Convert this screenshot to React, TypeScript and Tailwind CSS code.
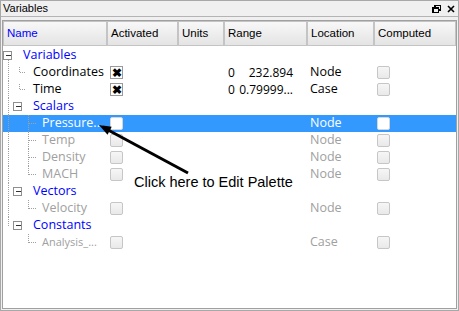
import React from "react";

type Row = {
  name: string;
  level: 0 | 1 | 2;
  tone: "group" | "on" | "off" | "sel";
  checked?: boolean;
  range?: [string, string];
  loc?: string;
  root?: "full" | "fromBox" | "toCenter";
  leaf1?: boolean;
  leaf2?: "full" | "half";
  small?: boolean;
};

const rows: Row[] = [
  { name: "Variables", level: 0, tone: "group", root: "fromBox" },
  { name: "Coordinates", level: 1, tone: "on", checked: true, range: ["0", "232.894"], loc: "Node", root: "full", leaf1: true },
  { name: "Time", level: 1, tone: "on", checked: true, range: ["0", "0.79999..."], loc: "Case", root: "full", leaf1: true },
  { name: "Scalars", level: 1, tone: "group", root: "full" },
  { name: "Pressure...", level: 2, tone: "sel", loc: "Node", root: "full", leaf2: "full" },
  { name: "Temp", level: 2, tone: "off", loc: "Node", root: "full", leaf2: "full" },
  { name: "Density", level: 2, tone: "off", loc: "Node", root: "full", leaf2: "full" },
  { name: "MACH", level: 2, tone: "off", loc: "Node", root: "full", leaf2: "half" },
  { name: "Vectors", level: 1, tone: "group", root: "full" },
  { name: "Velocity", level: 2, tone: "off", loc: "Node", root: "full", leaf2: "half" },
  { name: "Constants", level: 1, tone: "group", root: "toCenter" },
  { name: "Analysis_...", level: 2, tone: "off", loc: "Case", leaf2: "half", small: true },
];

const cols = ["Name", "Activated", "Units", "Range", "Location", "Computed"];
const widths = ["w-[104px]", "w-[71px]", "w-[46px]", "w-[83px]", "w-[67px]", "w-[82px]"];

const dot = { stroke: "#a0a0a0", strokeDasharray: "1 1", shapeRendering: "crispEdges" as const };

function Branch({ row }: { row: Row }) {
  const w = row.level === 0 ? 20 : row.level === 1 ? 30 : 39;
  const box = row.tone === "group" ? (row.level === 0 ? 0.5 : 10.5) : null;
  return (
    <svg width={w} height={17} className="shrink-0 overflow-visible">
      {row.root === "full" && <line x1={5.5} y1={0} x2={5.5} y2={17} {...dot} />}
      {row.root === "fromBox" && <line x1={5.5} y1={13} x2={5.5} y2={17} {...dot} />}
      {row.root === "toCenter" && <line x1={5.5} y1={0} x2={5.5} y2={9} {...dot} />}
      {row.leaf1 && (
        <>
          <line x1={16.5} y1={3} x2={16.5} y2={9} {...dot} />
          <line x1={17} y1={8.5} x2={23} y2={8.5} {...dot} />
        </>
      )}
      {row.leaf2 && (
        <>
          <line x1={25.5} y1={0} x2={25.5} y2={row.leaf2 === "full" ? 17 : 9} {...dot} />
          <line x1={26} y1={8.5} x2={33} y2={8.5} {...dot} />
        </>
      )}
      {box !== null && (
        <g shapeRendering="crispEdges">
          <rect x={box} y={4.5} width={8} height={8} fill="#fff" stroke="#8f8f8f" />
          <line x1={box + 2} y1={8.5} x2={box + 7} y2={8.5} stroke="#333" />
        </g>
      )}
    </svg>
  );
}

function Check({ checked, sel }: { checked?: boolean; sel?: boolean }) {
  if (checked) {
    return (
      <span className="flex h-[13px] w-[13px] items-center justify-center border border-[#9a9a9a] bg-white text-[12px] font-bold leading-none text-black">
        ✖
      </span>
    );
  }
  return (
    <span
      className={`h-[13px] w-[13px] rounded-[2px] border ${
        sel ? "border-[#d6d6d6] bg-white" : "border-[#c6c6c6] bg-linear-to-b from-[#f6f6f6] to-[#e9e9e9]"
      }`}
    />
  );
}

function DataRow({ row }: { row: Row }) {
  const sel = row.tone === "sel";
  const text =
    row.tone === "group"
      ? "text-[#0000ff]"
      : row.tone === "on"
        ? "text-black"
        : sel
          ? "text-white"
          : "text-[#a0a0a0]";
  const sub = sel ? "text-white" : row.tone === "on" ? "text-black" : "text-[#a0a0a0]";
  const cb = row.tone !== "group";
  return (
    <div className={`flex h-[17px] items-center ${sel ? "bg-[#3399ff]" : ""}`}>
      <div className={`${widths[0]} flex h-full items-center overflow-visible`}>
        <Branch row={row} />
        <span className={`${text} ${row.small ? "text-[11px]" : "text-[12.5px]"} whitespace-nowrap`}>{row.name}</span>
      </div>
      <div className={`${widths[1]} flex h-full items-center pl-[3px]`}>
        {cb && <Check checked={row.checked} sel={sel} />}
      </div>
      <div className={widths[2]} />
      <div className={`${widths[3]} flex items-center text-[12px] text-black`}>
        {row.range && (
          <>
            <span className="pl-[4px]">{row.range[0]}</span>
            <span className="flex-1 pr-[14px] text-right">{row.range[1]}</span>
          </>
        )}
      </div>
      <div className={`${widths[4]} pl-[3px] text-[12.5px] ${sub}`}>{row.loc}</div>
      <div className={`${widths[5]} flex h-full items-center pl-[3px]`}>
        {cb && <Check sel={sel} />}
      </div>
    </div>
  );
}

export default function App() {
  return (
    <div className="relative flex h-[311px] w-[459px] flex-col border border-[#a8a8a8] bg-[#f0f0f0] font-['Open_Sans',sans-serif]">
      {/* title bar */}
      <div className="flex h-[16px] items-center justify-between border-b border-[#b4b4b4] pl-[2px] pr-[3px] font-['Liberation_Sans',Arial,sans-serif] text-[11px] text-black">
        <span>Variables</span>
        <div className="flex items-center gap-[6px]">
          <svg width="9" height="8" viewBox="0 0 9 8" shapeRendering="crispEdges">
            <rect x="3" y="0" width="6" height="5" fill="none" stroke="#000" strokeWidth="1.5" />
            <rect x="0.75" y="2.75" width="5.5" height="4.5" fill="#f0f0f0" stroke="#000" strokeWidth="1.5" />
          </svg>
          <svg width="8" height="8" viewBox="0 0 8 8">
            <path d="M1 1 L7 7 M7 1 L1 7" stroke="#000" strokeWidth="1.6" />
          </svg>
        </div>
      </div>

      {/* table frame */}
      <div className="mx-[1px] mb-[1px] mt-[3px] flex-1 border border-[#a0a0a0] bg-white">
        <div className="flex h-[25px]">
          {cols.map((c, i) => (
            <div
              key={c}
              className={`${widths[i]} flex items-center border border-[#c4c4c4] bg-linear-to-b from-[#f8f8f8] to-[#e4e4e4] pl-[3px] font-['Liberation_Sans',Arial,sans-serif] text-[11.5px] ${
                i === 0 ? "text-[#0000ff]" : "text-black"
              }`}
            >
              {c}
            </div>
          ))}
        </div>
        <div className="pt-[1px]">
          {rows.map((r) => (
            <DataRow key={r.name} row={r} />
          ))}
        </div>
      </div>

      {/* callout */}
      <span className="absolute left-[133px] top-[171px] font-['Liberation_Sans',Arial,sans-serif] text-[14.5px] text-black">
        Click here to Edit Palette
      </span>
      <svg className="pointer-events-none absolute left-0 top-0" width="459" height="311">
        <line x1="187" y1="172" x2="108" y2="129.5" stroke="#000" strokeWidth="3" />
        <polygon points="98,124 110.7,125.7 106.5,133.7" fill="#000" />
      </svg>
    </div>
  );
}
